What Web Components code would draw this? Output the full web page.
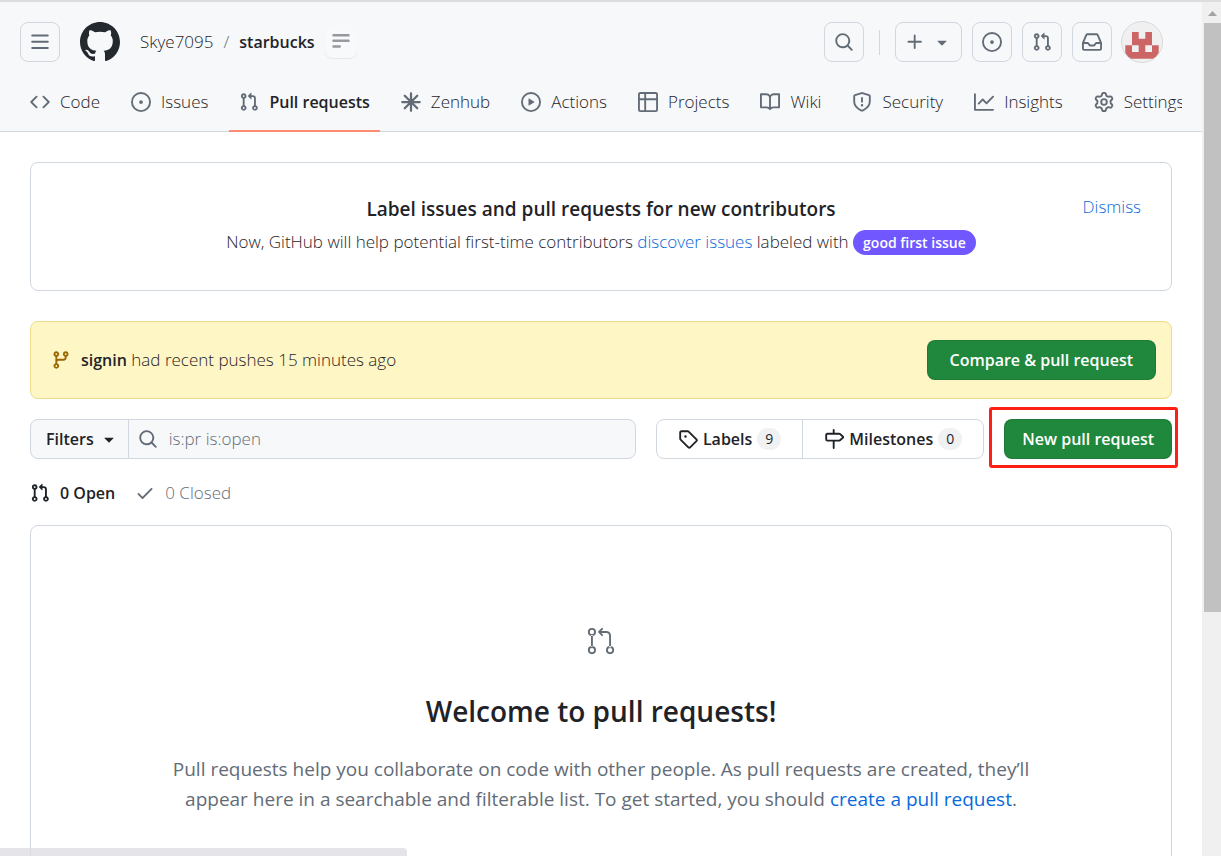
<!DOCTYPE html>
<html lang="en">
<head>
<meta charset="utf-8">
<meta name="viewport" content="width=device-width, initial-scale=1">
<title>Pull requests · Skye7095/starbucks</title>
<style>
    :root {
        --fg: #1f2328;
        --muted: #636c76;
        --link: #0969da;
        --border: #d0d7de;
        --subtle: #f6f8fa;
        --green: #1f883d;
        --text-sm: 14px;
        --text-bold: 16px;
        --text: 17px;
        --text-lg: 19px;
        --text-xl: 28px;
    }
    body {
        margin: 0;
        height: 100vh;
        overflow: hidden;
        background: #fff;
        color: var(--fg);
        font-family: "Open Sans", "Noto Sans", sans-serif;
        font-size: var(--text);
        font-weight: 350;
        line-height: 28px;
    }
    a { color: var(--link); text-decoration: none; }
</style>
</head>
<body>
<page-frame>
    <app-header slot="header">
        <repo-tab icon="code">Code</repo-tab>
        <repo-tab icon="issue">Issues</repo-tab>
        <repo-tab icon="pull" current>Pull requests</repo-tab>
        <repo-tab icon="zenhub">Zenhub</repo-tab>
        <repo-tab icon="play">Actions</repo-tab>
        <repo-tab icon="table">Projects</repo-tab>
        <repo-tab icon="book">Wiki</repo-tab>
        <repo-tab icon="shield">Security</repo-tab>
        <repo-tab icon="graph">Insights</repo-tab>
        <repo-tab icon="gear">Settings</repo-tab>
    </app-header>

    <contributor-tip>
        <span slot="title">Label issues and pull requests for new contributors</span>
        Now, GitHub will help potential first-time contributors <a href="#discover">discover issues</a> labeled with <issue-label>good first issue</issue-label>
    </contributor-tip>
    <push-banner branch="signin">had recent pushes 15 minutes ago</push-banner>
    <pull-toolbar></pull-toolbar>
    <state-counts></state-counts>
    <blank-slate>
        <span slot="title">Welcome to pull requests!</span>
        Pull requests help you collaborate on code with other people. As pull requests are created, they’ll appear here in a searchable and filterable list. To get started, you should <a href="#create">create a pull request</a>.
    </blank-slate>
</page-frame>

<script>
const ICONS = {
    menu: 'M1 2.75A.75.75 0 0 1 1.75 2h12.5a.75.75 0 0 1 0 1.5H1.75A.75.75 0 0 1 1 2.75Zm0 5A.75.75 0 0 1 1.75 7h12.5a.75.75 0 0 1 0 1.5H1.75A.75.75 0 0 1 1 7.75ZM1.75 12h12.5a.75.75 0 0 1 0 1.5H1.75a.75.75 0 0 1 0-1.5Z',
    github: 'M8 0c4.42 0 8 3.58 8 8a8.013 8.013 0 0 1-5.45 7.59c-.4.08-.55-.17-.55-.38 0-.27.01-1.13.01-2.2 0-.75-.25-1.23-.54-1.48 1.78-.2 3.65-.88 3.65-3.95 0-.88-.31-1.59-.82-2.15.08-.2.36-1.02-.08-2.12 0 0-.67-.22-2.2.82-.64-.18-1.32-.27-2-.27-.68 0-1.36.09-2 .27-1.53-1.03-2.2-.82-2.2-.82-.44 1.1-.16 1.92-.08 2.12-.51.56-.82 1.28-.82 2.15 0 3.06 1.86 3.75 3.64 3.95-.23.2-.44.55-.51 1.07-.46.21-1.61.55-2.33-.66-.15-.24-.6-.83-1.23-.82-.67.01-.27.38.01.53.34.19.73.9.82 1.13.16.45.68 1.31 2.69.94 0 .67.01 1.3.01 1.49 0 .21-.15.45-.55.38A7.995 7.995 0 0 1 0 8c0-4.42 3.58-8 8-8Z',
    code: 'm11.28 3.22 4.25 4.25a.75.75 0 0 1 0 1.06l-4.25 4.25a.749.749 0 0 1-1.275-.326.749.749 0 0 1 .215-.734L13.94 8l-3.72-3.72a.749.749 0 0 1 .326-1.275.749.749 0 0 1 .734.215Zm-6.56 0a.751.751 0 0 1 1.042.018.751.751 0 0 1 .018 1.042L2.06 8l3.72 3.72a.749.749 0 0 1-.326 1.275.749.749 0 0 1-.734-.215L.47 8.53a.75.75 0 0 1 0-1.06Z',
    issue: 'M8 9.5a1.5 1.5 0 1 0 0-3 1.5 1.5 0 0 0 0 3Z M8 0a8 8 0 1 1 0 16A8 8 0 0 1 8 0ZM1.5 8a6.5 6.5 0 1 0 13 0 6.5 6.5 0 0 0-13 0Z',
    pull: 'M1.5 3.25a2.25 2.25 0 1 1 3 2.122v5.256a2.251 2.251 0 1 1-1.5 0V5.372A2.25 2.25 0 0 1 1.5 3.25Zm5.677-.177L9.573.677A.25.25 0 0 1 10 .854V2.5h1A2.5 2.5 0 0 1 13.5 5v5.628a2.251 2.251 0 1 1-1.5 0V5a1 1 0 0 0-1-1h-1v1.646a.25.25 0 0 1-.427.177L7.177 3.427a.25.25 0 0 1 0-.354ZM3.75 2.5a.75.75 0 1 0 0 1.5.75.75 0 0 0 0-1.5Zm0 9.5a.75.75 0 1 0 0 1.5.75.75 0 0 0 0-1.5Zm8.25.75a.75.75 0 1 0 1.5 0 .75.75 0 0 0-1.5 0Z',
    play: 'M8 0a8 8 0 1 1 0 16A8 8 0 0 1 8 0ZM1.5 8a6.5 6.5 0 1 0 13 0 6.5 6.5 0 0 0-13 0Zm4.879-2.773 4.264 2.559a.25.25 0 0 1 0 .428l-4.264 2.559A.25.25 0 0 1 6 10.559V5.442a.25.25 0 0 1 .379-.215Z',
    table: 'M0 1.75C0 .784.784 0 1.75 0h12.5C15.216 0 16 .784 16 1.75v12.5A1.75 1.75 0 0 1 14.25 16H1.75A1.75 1.75 0 0 1 0 14.25ZM6.5 6.5v8h7.75a.25.25 0 0 0 .25-.25V6.5Zm8-1.5V1.75a.25.25 0 0 0-.25-.25H6.5V5Zm-13 1.5v7.75c0 .138.112.25.25.25H5v-8ZM5 5V1.5H1.75a.25.25 0 0 0-.25.25V5Z',
    book: 'M0 1.75A.75.75 0 0 1 .75 1h4.253c1.227 0 2.317.59 3 1.501A3.743 3.743 0 0 1 11.006 1h4.245a.75.75 0 0 1 .75.75v10.5a.75.75 0 0 1-.75.75h-4.507a2.25 2.25 0 0 0-1.591.659l-.622.621a.75.75 0 0 1-1.06 0l-.622-.621A2.25 2.25 0 0 0 5.258 13H.75a.75.75 0 0 1-.75-.75Zm7.251 10.324.004-5.073-.002-2.253A2.25 2.25 0 0 0 5.003 2.5H1.5v9h3.757a3.75 3.75 0 0 1 1.994.574ZM8.755 4.75l-.004 7.322a3.752 3.752 0 0 1 1.992-.572H14.5v-9h-3.495a2.25 2.25 0 0 0-2.25 2.25Z',
    shield: 'M7.467.133a1.748 1.748 0 0 1 1.066 0l5.25 1.68A1.75 1.75 0 0 1 15 3.48V7c0 1.566-.32 3.182-1.303 4.682-.983 1.498-2.585 2.813-5.032 3.855a1.697 1.697 0 0 1-1.33 0c-2.447-1.042-4.049-2.357-5.032-3.855C1.32 10.182 1 8.566 1 7V3.48a1.75 1.75 0 0 1 1.217-1.667Zm.61 1.429a.25.25 0 0 0-.153 0l-5.25 1.68a.25.25 0 0 0-.174.238V7c0 1.358.275 2.666 1.057 3.86.784 1.194 2.121 2.34 4.366 3.297a.196.196 0 0 0 .154 0c2.245-.956 3.582-2.104 4.366-3.298C13.225 9.666 13.5 8.36 13.5 7V3.48a.251.251 0 0 0-.174-.237l-5.25-1.68ZM8.75 4.75v3a.75.75 0 0 1-1.5 0v-3a.75.75 0 0 1 1.5 0ZM9 10.5a1 1 0 1 1-2 0 1 1 0 0 1 2 0Z',
    graph: 'M1.5 1.75V13.5h13.75a.75.75 0 0 1 0 1.5H.75a.75.75 0 0 1-.75-.75V1.75a.75.75 0 0 1 1.5 0Zm14.28 2.53-5.25 5.25a.75.75 0 0 1-1.06 0L7 7.06 4.28 9.78a.751.751 0 0 1-1.042-.018.751.751 0 0 1-.018-1.042l3.25-3.25a.75.75 0 0 1 1.06 0L10 7.94l4.72-4.72a.751.751 0 0 1 1.042.018.751.751 0 0 1 .018 1.042Z',
    gear: 'M8 0a8.2 8.2 0 0 1 .701.031C9.444.095 9.99.645 10.16 1.29l.288 1.107c.018.066.079.158.212.224.231.114.454.243.668.386.123.082.233.09.299.071l1.103-.303c.644-.176 1.392.021 1.82.63.27.385.506.792.704 1.218.315.675.111 1.422-.364 1.891l-.814.806c-.049.048-.098.147-.088.294.016.257.016.515 0 .772-.01.147.038.246.088.294l.814.806c.475.469.679 1.216.364 1.891a7.977 7.977 0 0 1-.704 1.217c-.428.61-1.176.807-1.82.63l-1.102-.302c-.067-.019-.177-.011-.3.071a5.909 5.909 0 0 1-.668.386c-.133.066-.194.158-.211.224l-.29 1.106c-.168.646-.715 1.196-1.458 1.26a8.006 8.006 0 0 1-1.402 0c-.743-.064-1.289-.614-1.458-1.26l-.289-1.106c-.018-.066-.079-.158-.212-.224a5.738 5.738 0 0 1-.668-.386c-.123-.082-.233-.09-.299-.071l-1.103.303c-.644.176-1.392-.021-1.82-.63a8.12 8.12 0 0 1-.704-1.218c-.315-.675-.111-1.422.363-1.891l.815-.806c.05-.048.098-.147.088-.294a6.214 6.214 0 0 1 0-.772c.01-.147-.038-.246-.088-.294l-.815-.806C.635 6.045.431 5.298.746 4.623a7.92 7.92 0 0 1 .704-1.217c.428-.61 1.176-.807 1.82-.63l1.102.302c.067.019.177.011.3-.071.214-.143.437-.272.668-.386.133-.066.194-.158.211-.224l.29-1.106C6.009.645 6.556.095 7.299.03 7.53.01 7.764 0 8 0Zm-.571 1.525c-.036.003-.108.036-.137.146l-.289 1.105c-.147.561-.549.967-.998 1.189-.173.086-.34.183-.5.29-.417.278-.97.423-1.529.27l-1.103-.303c-.109-.03-.175.016-.195.045-.22.312-.412.644-.573.99-.014.031-.021.11.059.19l.815.806c.411.406.562.957.53 1.456a4.709 4.709 0 0 0 0 .582c.032.499-.119 1.05-.53 1.456l-.815.806c-.081.08-.073.159-.059.19.162.346.353.677.573.989.02.03.085.076.195.046l1.102-.303c.56-.153 1.113-.008 1.53.27.161.107.328.204.501.29.447.222.85.629.997 1.189l.289 1.105c.029.109.101.143.137.146a6.6 6.6 0 0 0 1.142 0c.036-.003.108-.036.137-.146l.289-1.105c.147-.561.549-.967.998-1.189.173-.086.34-.183.5-.29.417-.278.97-.423 1.529-.27l1.103.303c.109.029.175-.016.195-.045.22-.313.411-.644.573-.99.014-.031.021-.11-.059-.19l-.815-.806c-.411-.406-.562-.957-.53-1.456a4.709 4.709 0 0 0 0-.582c-.032-.499.119-1.05.53-1.456l.815-.806c.081-.08.073-.159.059-.19a6.464 6.464 0 0 0-.573-.989c-.02-.03-.085-.076-.195-.046l-1.102.303c-.56.153-1.113.008-1.53-.27a4.44 4.44 0 0 0-.501-.29c-.447-.222-.85-.629-.997-1.189l-.289-1.105c-.029-.11-.101-.143-.137-.146a6.6 6.6 0 0 0-1.142 0ZM11 8a3 3 0 1 1-6 0 3 3 0 0 1 6 0ZM9.5 8a1.5 1.5 0 1 0-3.001.001A1.5 1.5 0 0 0 9.5 8Z',
    search: 'M10.68 11.74a6 6 0 0 1-7.922-8.982 6 6 0 0 1 8.982 7.922l3.04 3.04a.749.749 0 0 1-.326 1.275.749.749 0 0 1-.734-.215ZM11.5 7a4.499 4.499 0 1 0-8.997 0A4.499 4.499 0 0 0 11.5 7Z',
    plus: 'M7.75 2a.75.75 0 0 1 .75.75V7h4.25a.75.75 0 0 1 0 1.5H8.5v4.25a.75.75 0 0 1-1.5 0V8.5H2.75a.75.75 0 0 1 0-1.5H7V2.75A.75.75 0 0 1 7.75 2Z',
    caret: 'm4.427 7.427 3.396 3.396a.25.25 0 0 0 .354 0l3.396-3.396A.25.25 0 0 0 11.396 7H4.604a.25.25 0 0 0-.177.427Z',
    inbox: 'M2.8 2.06A1.75 1.75 0 0 1 4.41 1h7.18c.7 0 1.333.417 1.61 1.06l2.74 6.395c.04.093.06.194.06.295v4.5A1.75 1.75 0 0 1 14.25 15H1.75A1.75 1.75 0 0 1 0 13.25v-4.5c0-.101.02-.202.06-.295Zm1.61.44a.25.25 0 0 0-.23.152L1.887 8H4.75a.75.75 0 0 1 .6.3L6.625 10h2.75l1.275-1.7a.75.75 0 0 1 .6-.3h2.863L11.82 2.652a.25.25 0 0 0-.23-.152Zm10.09 7h-2.875l-1.275 1.7a.75.75 0 0 1-.6.3h-3.5a.75.75 0 0 1-.6-.3L4.375 9.5H1.5v3.75c0 .138.112.25.25.25h12.5a.25.25 0 0 0 .25-.25Z',
    branch: 'M9.5 3.25a2.25 2.25 0 1 1 3 2.122V6A2.5 2.5 0 0 1 10 8.5H6a1 1 0 0 0-1 1v1.128a2.251 2.251 0 1 1-1.5 0V5.372a2.25 2.25 0 1 1 1.5 0v1.836A2.493 2.493 0 0 1 6 7h4a1 1 0 0 0 1-1v-.628A2.25 2.25 0 0 1 9.5 3.25Zm-6 0a.75.75 0 1 0 1.5 0 .75.75 0 0 0-1.5 0Zm8.25-.75a.75.75 0 1 0 0 1.5.75.75 0 0 0 0-1.5ZM4.25 12a.75.75 0 1 0 0 1.5.75.75 0 0 0 0-1.5Z',
    tag: 'M1 7.775V2.75C1 1.784 1.784 1 2.75 1h5.025c.464 0 .91.184 1.238.513l6.25 6.25a1.75 1.75 0 0 1 0 2.474l-5.026 5.026a1.75 1.75 0 0 1-2.474 0l-6.25-6.25A1.752 1.752 0 0 1 1 7.775Zm1.5 0c0 .066.026.13.073.177l6.25 6.25a.25.25 0 0 0 .354 0l5.025-5.025a.25.25 0 0 0 0-.354l-6.25-6.25a.25.25 0 0 0-.177-.073H2.75a.25.25 0 0 0-.25.25ZM6 5a1 1 0 1 1 0 2 1 1 0 0 1 0-2Z',
    milestone: 'M7.75 0a.75.75 0 0 1 .75.75V3h3.634c.414 0 .814.147 1.13.414l2.07 1.75a1.75 1.75 0 0 1 0 2.672l-2.07 1.75a1.75 1.75 0 0 1-1.13.414H8.5v5.25a.75.75 0 0 1-1.5 0V10H2.75A1.75 1.75 0 0 1 1 8.25v-3.5C1 3.784 1.784 3 2.75 3H7V.75A.75.75 0 0 1 7.75 0Zm4.384 8.5a.25.25 0 0 0 .161-.06l2.07-1.75a.248.248 0 0 0 0-.38l-2.07-1.75a.25.25 0 0 0-.161-.06H2.75a.25.25 0 0 0-.25.25v3.5c0 .138.112.25.25.25h9.384Z',
    check: 'M13.78 4.22a.75.75 0 0 1 0 1.06l-7.25 7.25a.75.75 0 0 1-1.06 0L2.22 9.28a.751.751 0 0 1 .018-1.042.751.751 0 0 1 1.042-.018L6 10.94l6.72-6.72a.75.75 0 0 1 1.06 0Z',
    // drawn on a 24 unit grid
    pullLarge: 'M16 19.25a3.25 3.25 0 1 1 6.5 0 3.25 3.25 0 0 1-6.5 0Zm-14.5 0a3.25 3.25 0 1 1 6.5 0 3.25 3.25 0 0 1-6.5 0Zm0-14.5a3.25 3.25 0 1 1 6.5 0 3.25 3.25 0 0 1-6.5 0ZM4.75 3a1.75 1.75 0 1 0 .001 3.501A1.75 1.75 0 0 0 4.75 3Zm0 14.5a1.75 1.75 0 1 0 .001 3.501A1.75 1.75 0 0 0 4.75 17.5Zm14.5 0a1.75 1.75 0 1 0 .001 3.501 1.75 1.75 0 0 0-.001-3.501Z M13.405 1.72a.75.75 0 0 1 0 1.06L12.185 4h4.065A3.75 3.75 0 0 1 20 7.75v8.75a.75.75 0 0 1-1.5 0V7.75a2.25 2.25 0 0 0-2.25-2.25h-4.064l1.22 1.22a.75.75 0 0 1-1.061 1.06l-2.5-2.5a.75.75 0 0 1 0-1.06l2.5-2.5a.75.75 0 0 1 1.06 0ZM4.75 7.25A.75.75 0 0 1 5.5 8v8A.75.75 0 0 1 4 16V8a.75.75 0 0 1 .75-.75Z'
};

// Icons that are stroked instead of filled.
const STROKED = {
    zenhub: '<path stroke-width="1.8" d="M8 1v14M1 8h14M3 3l10 10M13 3L3 13"/>',
    lines: '<path stroke-width="2" d="M2 2.5h12M2 7h12M2 11.5h5"/>'
};

function render(element, html) {
    const root = element.attachShadow({ mode: 'open' });
    root.innerHTML = html;
    return root;
}

class GhIcon extends HTMLElement {
    constructor() {
        super();
        this.attachShadow({ mode: 'open' });
    }

    connectedCallback() {
        const name = this.getAttribute('name');
        const size = this.getAttribute('size') || 20;
        const grid = name === 'pullLarge' ? 24 : 16;
        const shape = STROKED[name] || `<path fill="currentColor" fill-rule="evenodd" d="${ICONS[name]}"/>`;
        this.shadowRoot.innerHTML = `
            <style>
                :host { display: inline-flex; flex: none; }
                svg { display: block; }
            </style>
            <svg width="${size}" height="${size}" viewBox="0 0 ${grid} ${grid}" fill="none"
                 ${STROKED[name] ? 'stroke="currentColor" stroke-linecap="round"' : ''} aria-hidden="true">${shape}</svg>
        `;
    }
}

class IconButton extends HTMLElement {
    connectedCallback() {
        if (this.shadowRoot) return;
        render(this, `
            <style>
                :host { display: block; flex: none; }
                button {
                    display: flex;
                    align-items: center;
                    justify-content: center;
                    gap: 7px;
                    min-width: 40px;
                    height: 40px;
                    margin: 0;
                    padding: 0 9px;
                    box-sizing: border-box;
                    border: 1px solid var(--border);
                    border-radius: 8px;
                    background: transparent;
                    color: var(--muted);
                }
            </style>
            <button type="button" aria-label="${this.getAttribute('label')}"><slot></slot></button>
        `);
    }
}

class GreenButton extends HTMLElement {
    constructor() {
        super();
        render(this, `
            <style>
                :host { display: block; flex: none; }
                button {
                    display: block;
                    width: 100%;
                    height: 40px;
                    margin: 0;
                    padding: 0 var(--button-pad, 17px);
                    border: 1px solid rgba(31, 35, 40, 0.15);
                    border-radius: 8px;
                    background: var(--green);
                    color: #fff;
                    font: inherit;
                    font-size: var(--text-bold);
                    font-weight: 600;
                    white-space: nowrap;
                }
            </style>
            <button type="button"><slot></slot></button>
        `);
    }
}

class UserAvatar extends HTMLElement {
    constructor() {
        super();
        render(this, `
            <style>
                :host { display: block; flex: none; }
                a, svg { display: block; }
                svg { overflow: visible; }
            </style>
            <a href="#profile" aria-label="Open user menu">
                <svg width="40" height="40" viewBox="0 0 40 40">
                    <clipPath id="round"><circle cx="20" cy="20" r="20"/></clipPath>
                    <circle cx="20" cy="20" r="20.5" fill="#f0f0f0" stroke="#d8dadc"/>
                    <path clip-path="url(#round)" fill="#cc6666" d="M10 10h6.7v6.7h6.6V10H30v13.3h6.7v13.4H3.3V23.3H10ZM10 23.3V30h6.7v-6.7ZM23.3 23.3V30H30v-6.7Z" fill-rule="evenodd"/>
                </svg>
            </a>
        `);
    }
}

class RepoTab extends HTMLElement {
    connectedCallback() {
        if (this.shadowRoot) return;
        const current = this.hasAttribute('current');
        render(this, `
            <style>
                :host { display: block; flex: none; }
                a {
                    display: flex;
                    align-items: center;
                    gap: 10px;
                    height: 60px;
                    padding: 0 10px;
                    box-sizing: border-box;
                    color: var(--fg);
                    text-decoration: none;
                    white-space: nowrap;
                }
                a.current {
                    font-size: var(--text-bold);
                    font-weight: 600;
                    box-shadow: inset 0 -2px #fd8c73;
                }
                gh-icon { color: var(--muted); }
            </style>
            <a href="#${this.getAttribute('icon')}" ${current ? 'class="current" aria-current="page"' : ''}>
                <gh-icon name="${this.getAttribute('icon')}"></gh-icon><span><slot></slot></span>
            </a>
        `);
    }
}

class AppHeader extends HTMLElement {
    constructor() {
        super();
        render(this, `
            <style>
                :host {
                    display: block;
                    padding-top: 20px;
                    border-top: 2px solid #dcdddf;
                    background: var(--subtle);
                    box-shadow: inset 0 -1px var(--border);
                }
                .bar {
                    display: flex;
                    align-items: center;
                    height: 40px;
                    padding: 0 40px 0 20px;
                }
                .home {
                    display: flex;
                    margin: 0 20px;
                    color: #24292f;
                }
                .crumbs {
                    display: flex;
                    gap: 10px;
                    flex: 1;
                    align-items: center;
                }
                .crumbs a { color: inherit; text-decoration: none; }
                .crumbs .repo {
                    font-size: var(--text-bold);
                    font-weight: 600;
                }
                .slash { color: var(--muted); }
                .outline {
                    display: flex;
                    padding: 6px;
                    border: 0;
                    border-radius: 8px;
                    background: #f8f9fa;
                    box-shadow: 0 1px 1px rgba(31, 35, 40, 0.08);
                    color: #969a9e;
                }
                .actions {
                    display: flex;
                    align-items: center;
                    gap: 10px;
                }
                .divider {
                    width: 1px;
                    height: 25px;
                    margin: 0 5px;
                    background: var(--border);
                }
                nav {
                    display: flex;
                    gap: 11px;
                    margin: 10px 20px 0;
                    overflow: hidden;
                }
            </style>
            <div class="bar">
                <icon-button label="Open navigation menu"><gh-icon name="menu"></gh-icon></icon-button>
                <a class="home" href="#home" aria-label="Homepage"><gh-icon name="github" size="40"></gh-icon></a>
                <div class="crumbs">
                    <a href="#owner">Skye7095</a>
                    <span class="slash">/</span>
                    <a class="repo" href="#repo">starbucks</a>
                    <button class="outline" type="button" aria-label="Page outline"><gh-icon name="lines"></gh-icon></button>
                </div>
                <div class="actions">
                    <icon-button label="Search"><gh-icon name="search"></gh-icon></icon-button>
                    <span class="divider"></span>
                    <icon-button label="Create new"><gh-icon name="plus"></gh-icon><gh-icon name="caret"></gh-icon></icon-button>
                    <icon-button label="Issues"><gh-icon name="issue"></gh-icon></icon-button>
                    <icon-button label="Pull requests"><gh-icon name="pull"></gh-icon></icon-button>
                    <icon-button label="Notifications"><gh-icon name="inbox"></gh-icon></icon-button>
                    <user-avatar></user-avatar>
                </div>
            </div>
            <nav aria-label="Repository"><slot></slot></nav>
        `);
    }
}

class IssueLabel extends HTMLElement {
    constructor() {
        super();
        render(this, `
            <style>
                :host {
                    display: inline-block;
                    padding: 0 10px;
                    border-radius: 13px;
                    background: #7057ff;
                    color: #fff;
                    font-size: var(--text-sm);
                    font-weight: 600;
                    line-height: 25px;
                }
            </style>
            <slot></slot>
        `);
    }
}

class ContributorTip extends HTMLElement {
    constructor() {
        super();
        render(this, `
            <style>
                :host {
                    display: grid;
                    grid-template-columns: 1fr auto 1fr;
                    padding: 30px 30px 31px;
                    border: 1px solid var(--border);
                    border-radius: 8px;
                }
                .copy {
                    grid-column: 2;
                    text-align: center;
                }
                h2, p { margin: 0; }
                h2 {
                    font-size: var(--text-lg);
                    font-weight: 600;
                    line-height: 32px;
                }
                p { line-height: 34px; }
                a {
                    justify-self: end;
                    color: var(--link);
                    text-decoration: none;
                }
            </style>
            <div class="copy">
                <h2><slot name="title"></slot></h2>
                <p><slot></slot></p>
            </div>
            <a href="#dismiss">Dismiss</a>
        `);
    }
}

class PushBanner extends HTMLElement {
    connectedCallback() {
        if (this.shadowRoot) return;
        render(this, `
            <style>
                :host {
                    display: flex;
                    align-items: center;
                    gap: 10px;
                    margin-top: 30px;
                    padding: 18px 15px 18px 20px;
                    border: 1px solid #eddc8a;
                    border-radius: 8px;
                    background: #fff6c5;
                }
                gh-icon { color: #9a6700; }
                .message { flex: 1; }
                strong {
                    font-size: var(--text-bold);
                    font-weight: 600;
                }
                green-button { --button-pad: 22px; }
            </style>
            <gh-icon name="branch"></gh-icon>
            <span class="message"><strong>${this.getAttribute('branch')}</strong> <slot></slot></span>
            <green-button>Compare &amp; pull request</green-button>
        `);
    }
}

class PullToolbar extends HTMLElement {
    constructor() {
        super();
        render(this, `
            <style>
                :host {
                    display: flex;
                    gap: 20px;
                    margin-top: 20px;
                }
                .search {
                    display: flex;
                    flex: 1;
                    height: 40px;
                    box-sizing: border-box;
                    border: 1px solid var(--border);
                    border-radius: 8px;
                    background: var(--subtle);
                    overflow: hidden;
                }
                .filters {
                    display: flex;
                    align-items: center;
                    gap: 5px;
                    margin: 0;
                    padding: 0 9px 0 15px;
                    border: 0;
                    border-right: 1px solid var(--border);
                    background: transparent;
                    color: var(--fg);
                    font: inherit;
                    font-size: var(--text-bold);
                    font-weight: 600;
                }
                label {
                    display: flex;
                    align-items: center;
                    flex: 1;
                    gap: 11px;
                    padding: 0 9px;
                    color: var(--muted);
                }
                input {
                    flex: 1;
                    min-width: 0;
                    padding: 0;
                    border: 0;
                    outline: 0;
                    background: transparent;
                    color: inherit;
                    font: inherit;
                }
                .group {
                    display: flex;
                    height: 40px;
                    box-sizing: border-box;
                    border: 1px solid var(--border);
                    border-radius: 8px;
                }
                .group a {
                    display: flex;
                    align-items: center;
                    gap: 5px;
                    padding: 0 21px;
                    color: var(--fg);
                    font-size: var(--text-bold);
                    font-weight: 600;
                    text-decoration: none;
                }
                .group a + a { border-left: 1px solid var(--border); }
                .count {
                    min-width: 24px;
                    border-radius: 12px;
                    background: #eff1f3;
                    font-size: var(--text-sm);
                    font-weight: 400;
                    line-height: 22px;
                    text-align: center;
                }
                .create { position: relative; }
                /* highlight frame around the create button */
                .create::after {
                    content: "";
                    position: absolute;
                    inset: -12px -6px -9px -15px;
                    border: 3px solid #ff1f14;
                    border-radius: 3px;
                    pointer-events: none;
                }
            </style>
            <div class="search">
                <button class="filters" type="button">Filters<gh-icon name="caret"></gh-icon></button>
                <label for="query"><gh-icon name="search"></gh-icon>
                    <input id="query" type="text" value="is:pr is:open" aria-label="Search all issues">
                </label>
            </div>
            <div class="group">
                <a href="#labels"><gh-icon name="tag"></gh-icon>Labels <span class="count">9</span></a>
                <a href="#milestones"><gh-icon name="milestone"></gh-icon>Milestones <span class="count">0</span></a>
            </div>
            <green-button class="create">New pull request</green-button>
        `);
    }
}

class StateCounts extends HTMLElement {
    constructor() {
        super();
        render(this, `
            <style>
                :host {
                    display: flex;
                    align-items: center;
                    gap: 20px;
                    padding: 20px 0 18px;
                }
                a {
                    display: flex;
                    align-items: center;
                    gap: 10px;
                    color: var(--muted);
                    text-decoration: none;
                }
                .open {
                    color: var(--fg);
                    font-size: var(--text-bold);
                    font-weight: 600;
                }
            </style>
            <a class="open" href="#open"><gh-icon name="pull"></gh-icon>0 Open</a>
            <a href="#closed"><gh-icon name="check"></gh-icon>0 Closed</a>
        `);
    }
}

class BlankSlate extends HTMLElement {
    constructor() {
        super();
        render(this, `
            <style>
                :host {
                    display: block;
                    padding: 100px 40px;
                    border: 1px solid var(--border);
                    border-radius: 8px;
                    text-align: center;
                }
                .mark {
                    display: flex;
                    justify-content: center;
                    color: var(--muted);
                }
                h2 {
                    margin: 33px 0 21px;
                    font-size: var(--text-xl);
                    font-weight: 600;
                    line-height: 44px;
                }
                p {
                    max-width: 880px;
                    margin: 0 auto;
                    color: var(--muted);
                    font-size: var(--text-lg);
                    font-weight: 400;
                    line-height: 30px;
                }
            </style>
            <div class="mark"><gh-icon name="pullLarge" size="30"></gh-icon></div>
            <h2><slot name="title"></slot></h2>
            <p><slot></slot></p>
        `);
    }
}

class PageFrame extends HTMLElement {
    constructor() {
        super();
        render(this, `
            <style>
                :host {
                    display: flex;
                    height: 100vh;
                    position: relative;
                }
                .view {
                    flex: 1;
                    min-width: 0;
                    overflow: hidden;
                }
                main { padding: 30px 30px 0; }
                .track {
                    display: flex;
                    flex-direction: column;
                    flex: none;
                    width: 19px;
                    background: #f0f0f0;
                    padding-left: 2px;
                    box-sizing: border-box;
                    border-top: 2px solid #dcdddf;
                }
                .track svg { display: block; }
                .thumb {
                    height: 69%;
                    background: #c1c1c1;
                }
                /* browser status bubble */
                .status {
                    position: absolute;
                    left: 0;
                    bottom: 0;
                    width: 33.3%;
                    height: 8px;
                    border-top-right-radius: 4px;
                    background: rgba(222, 223, 228, 0.8);
                }
            </style>
            <div class="view">
                <slot name="header"></slot>
                <main><slot></slot></main>
            </div>
            <div class="track" aria-hidden="true">
                <svg width="17" height="21" viewBox="0 0 17 21"><path fill="#a3a3a3" d="M4 14l4.5-5 4.5 5Z"/></svg>
                <div class="thumb"></div>
            </div>
            <div class="status"></div>
        `);
    }
}

customElements.define('gh-icon', GhIcon);
customElements.define('icon-button', IconButton);
customElements.define('green-button', GreenButton);
customElements.define('user-avatar', UserAvatar);
customElements.define('repo-tab', RepoTab);
customElements.define('app-header', AppHeader);
customElements.define('issue-label', IssueLabel);
customElements.define('contributor-tip', ContributorTip);
customElements.define('push-banner', PushBanner);
customElements.define('pull-toolbar', PullToolbar);
customElements.define('state-counts', StateCounts);
customElements.define('blank-slate', BlankSlate);
customElements.define('page-frame', PageFrame);
</script>
</body>
</html>
